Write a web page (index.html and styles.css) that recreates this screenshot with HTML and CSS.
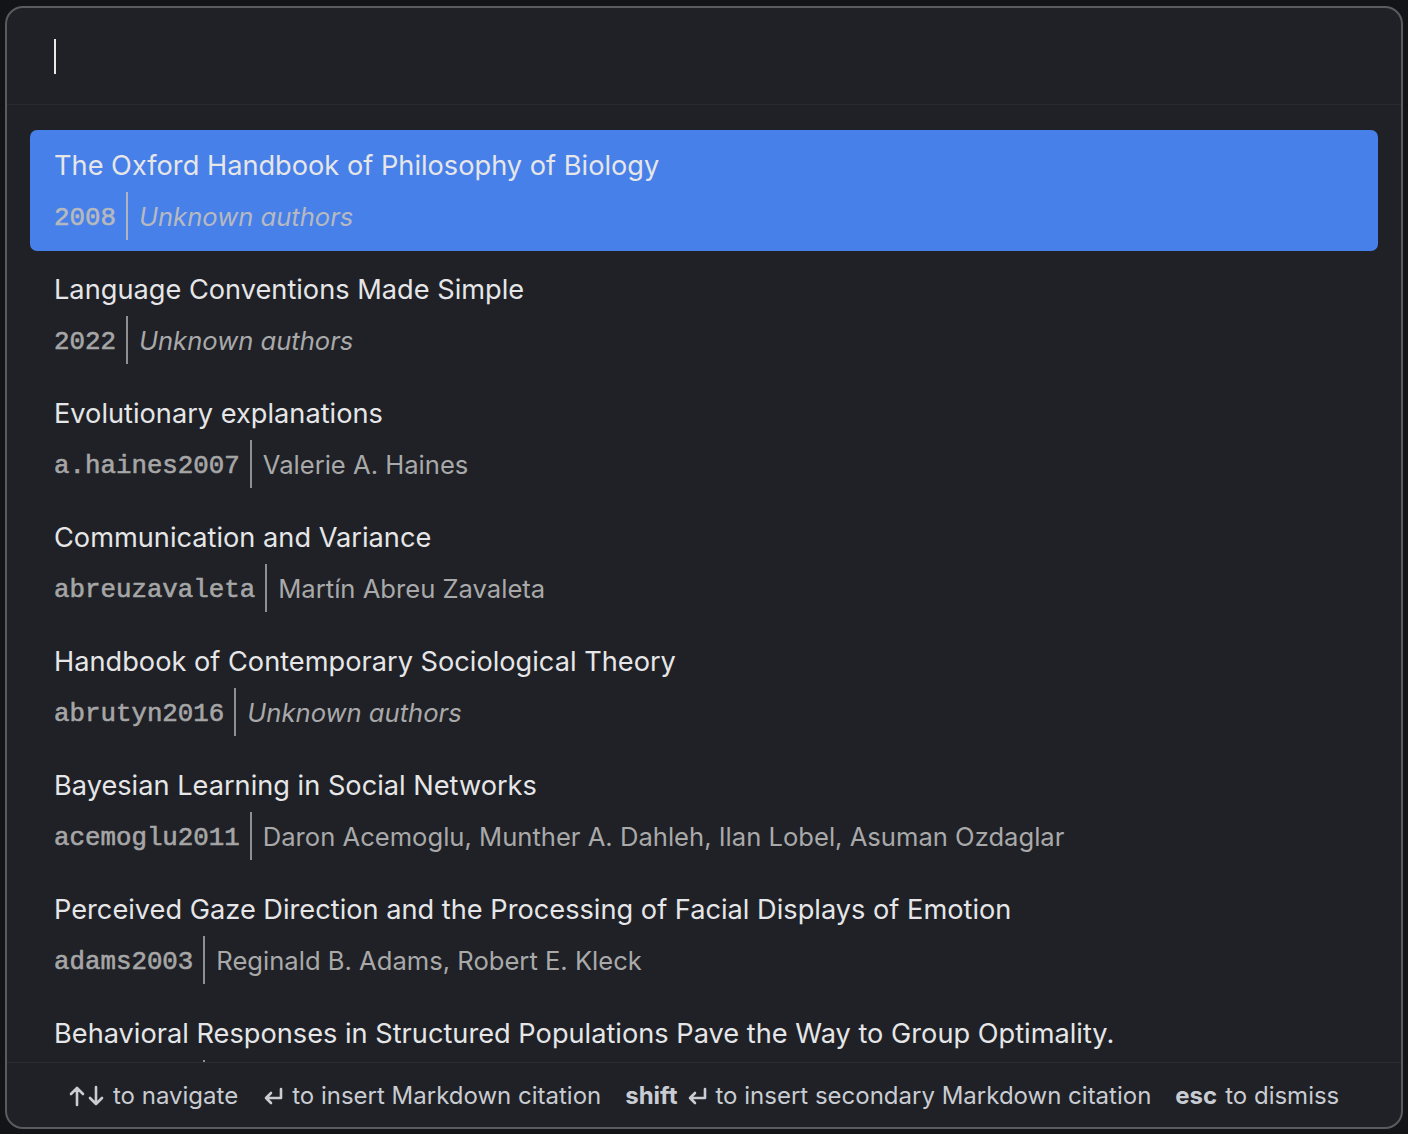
FILE: index.html
```html
<!DOCTYPE html>
<html lang="en">
<head>
<meta charset="utf-8">
<title>Citation picker</title>
<link rel="stylesheet" href="styles.css">
</head>
<body>
<div class="modal">
  <div class="search"><span class="caret"></span></div>
  <div class="list">
    <div class="row active">
      <div class="title">The Oxford Handbook of Philosophy of Biology</div>
      <div class="meta"><span class="key">2008</span><span class="authors unknown">Unknown authors</span></div>
    </div>
    <div class="row">
      <div class="title">Language Conventions Made Simple</div>
      <div class="meta"><span class="key">2022</span><span class="authors unknown">Unknown authors</span></div>
    </div>
    <div class="row">
      <div class="title">Evolutionary explanations</div>
      <div class="meta"><span class="key">a.haines2007</span><span class="authors">Valerie A. Haines</span></div>
    </div>
    <div class="row">
      <div class="title">Communication and Variance</div>
      <div class="meta"><span class="key">abreuzavaleta</span><span class="authors">Martín Abreu Zavaleta</span></div>
    </div>
    <div class="row">
      <div class="title">Handbook of Contemporary Sociological Theory</div>
      <div class="meta"><span class="key">abrutyn2016</span><span class="authors unknown">Unknown authors</span></div>
    </div>
    <div class="row">
      <div class="title">Bayesian Learning in Social Networks</div>
      <div class="meta"><span class="key">acemoglu2011</span><span class="authors">Daron Acemoglu, Munther A. Dahleh, Ilan Lobel, Asuman Ozdaglar</span></div>
    </div>
    <div class="row">
      <div class="title">Perceived Gaze Direction and the Processing of Facial Displays of Emotion</div>
      <div class="meta"><span class="key">adams2003</span><span class="authors">Reginald B. Adams, Robert E. Kleck</span></div>
    </div>
    <div class="row">
      <div class="title">Behavioral Responses in Structured Populations Pave the Way to Group Optimality.</div>
      <div class="meta"><span class="key">akcay2012</span><span class="authors">Erol Akçay, Jeremy Van Cleve</span></div>
    </div>
  </div>
  <div class="footer">
    <span class="hint"><svg class="ico nav" viewBox="0 0 36 22" aria-label="up down"><path d="M8 20V3M2 9l6-6 6 6M27 2v17M21 13l6 6 6-6"/></svg><span>to navigate</span></span>
    <span class="hint"><svg class="ico ret" viewBox="0 0 22 22" aria-label="enter"><path d="M19 4v9H4M9 8l-5 5 5 5"/></svg><span>to insert Markdown citation</span></span>
    <span class="hint"><b>shift</b><svg class="ico ret" viewBox="0 0 22 22" aria-label="enter"><path d="M19 4v9H4M9 8l-5 5 5 5"/></svg><span>to insert secondary Markdown citation</span></span>
    <span class="hint"><b>esc</b><span>to dismiss</span></span>
  </div>
</div>
</body>
</html>
```
FILE: styles.css
```css
* { box-sizing: border-box; }
html, body {
  margin: 0;
  padding: 0;
  background: #131417;
  height: 1134px;
  overflow: hidden;
}
body {
  font-family: Inter, "Noto Sans", "Liberation Sans", sans-serif;
  padding: 6px 5px 0 5px;
}
.modal {
  width: 1398px;
  height: 1123px;
  background: #1f2126;
  border: 2px solid #5a5b5e;
  border-radius: 18px;
  display: flex;
  flex-direction: column;
  overflow: hidden;
}
.search {
  height: 97px;
  flex: none;
  border-bottom: 1px solid #292b30;
  padding: 31px 0 0 47px;
}
.caret {
  display: block;
  width: 2px;
  height: 35px;
  background: #e8e8e8;
}
.list {
  flex: 1;
  overflow: hidden;
  padding: 25px 23px 0 23px;
  display: flex;
  flex-direction: column;
  gap: 3px;
}
.row {
  flex: none;
  height: 121px;
  padding: 18px 24px 0 24px;
  border-radius: 7px;
}
.row.active { background: #4680e8; }
.title {
  font-size: 27.2px;
  line-height: 36px;
  color: #e6e6e8;
  white-space: nowrap;
}
.meta {
  margin-top: 8px;
  height: 48px;
  display: flex;
  align-items: center;
  white-space: nowrap;
}
.key {
  font-family: "Liberation Mono", monospace;
  font-size: 25.8px;
  font-weight: 400;
  -webkit-text-stroke: 0.6px currentColor;
  color: #a6a6a7;
  padding-right: 10px;
  padding-top: 5px;
  height: 48px;
  line-height: 43px;
  border-right: 2px solid #8e8f92;
}
.authors {
  font-size: 25.6px;
  color: #a9a9aa;
  padding-left: 11px;
}
.unknown { font-style: italic; }
.row.active .key { color: #b6b9bf; border-right-color: #b0b4bd; }
.row.active .authors { color: #b6b9c1; }
.footer {
  flex: none;
  height: 65px;
  padding-top: 2px;
  border-top: 1px solid #2a2c31;
  display: flex;
  align-items: center;
  padding-left: 62px;
  gap: 24px;
  font-size: 24px;
  line-height: 32px;
  color: #c9ccd2;
  white-space: nowrap;
}
.hint { display: flex; align-items: center; gap: 8px; }
.footer b { font-weight: 700; }
.ico {
  display: block;
  flex: none;
  fill: none;
  stroke: #c9ccd2;
  stroke-width: 2.6;
  stroke-linecap: round;
  stroke-linejoin: round;
}
.ico.nav { width: 36px; height: 22px; }
.ico.ret { width: 22px; height: 22px; }
```
